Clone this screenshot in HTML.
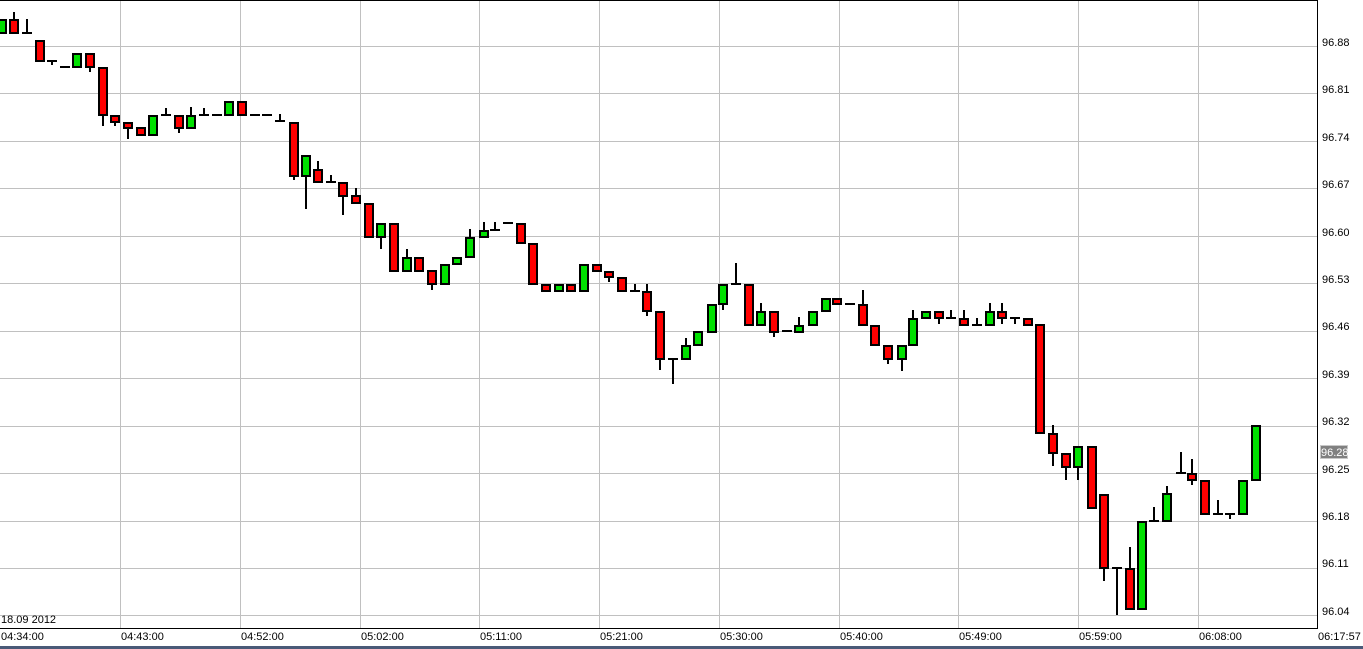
<!DOCTYPE html>
<html><head><meta charset="utf-8"><style>
html,body{margin:0;padding:0;background:#fff;}
#c{position:relative;width:1363px;height:649px;overflow:hidden;background:#fff;font-family:"Liberation Sans",sans-serif;font-size:11px;color:#000;}
.h{position:absolute;left:0;width:1317px;height:1px;background:#c0c0c0;}
.v{position:absolute;top:0;height:628px;width:1px;background:#c0c0c0;}
.b{position:absolute;box-sizing:border-box;border:2px solid #000;width:10px;}
.w{position:absolute;width:2px;background:#000;}
.d{position:absolute;height:2px;width:10px;background:#000;}
.pl{position:absolute;left:1322px;line-height:12px;}
.tl{position:absolute;top:631px;line-height:12px;}
</style></head><body><div id="c">
<div id="g"></div>
<div style="position:absolute;left:0;top:0;width:1317px;height:1px;background:#000"></div>
<div style="position:absolute;left:1317px;top:0;width:1px;height:629px;background:#000"></div>
<div style="position:absolute;left:0;top:628px;width:1318px;height:1px;background:#000"></div>
<div style="position:absolute;left:0;top:646px;width:1363px;height:3px;background:#4a5a78"></div>
<div style="position:absolute;left:1px;top:614px;line-height:12px">18.09 2012</div>
<div style="position:absolute;left:1320px;top:445px;width:28px;height:14px;background:#808080;border:1px solid #c8c8c8;color:#fff;line-height:14px;text-align:center;box-sizing:border-box">96.28</div>
<div class="pl" style="top:37px">96.88</div>
<div class="pl" style="top:84px">96.81</div>
<div class="pl" style="top:132px">96.74</div>
<div class="pl" style="top:179px">96.67</div>
<div class="pl" style="top:227px">96.60</div>
<div class="pl" style="top:274px">96.53</div>
<div class="pl" style="top:321px">96.46</div>
<div class="pl" style="top:369px">96.39</div>
<div class="pl" style="top:416px">96.32</div>
<div class="pl" style="top:464px">96.25</div>
<div class="pl" style="top:511px">96.18</div>
<div class="pl" style="top:558px">96.11</div>
<div class="pl" style="top:606px">96.04</div>
<div class="tl" style="left:1px">04:34:00</div>
<div class="tl" style="left:121px">04:43:00</div>
<div class="tl" style="left:241px">04:52:00</div>
<div class="tl" style="left:361px">05:02:00</div>
<div class="tl" style="left:480px">05:11:00</div>
<div class="tl" style="left:600px">05:21:00</div>
<div class="tl" style="left:720px">05:30:00</div>
<div class="tl" style="left:840px">05:40:00</div>
<div class="tl" style="left:959px">05:49:00</div>
<div class="tl" style="left:1079px">05:59:00</div>
<div class="tl" style="left:1199px">06:08:00</div>
<div class="tl" style="left:1318px">06:17:57</div>
<div id="k"></div>
</div>
<script>
var g='';
for(var i=0;i<13;i++){var y=Math.round(46+i*47.45);g+='<div class="h" style="top:'+y+'px"></div>';}
[120,240,360,479,599,719,839,958,1078,1198].forEach(function(x){g+='<div class="v" style="left:'+x+'px"></div>';});
document.getElementById('g').innerHTML=g;
// [x0, top, bottom, type, wickTop, wickBottom]
var D=[
[-3,19,33,'g'],[9,19,33,'r',12],[22,33,33,'d',19],[35,40,61,'r'],[47,61,61,'d',61,65],[60,67,67,'d'],
[72,53,67,'g'],[85,53,67,'r',0,72],[98,67,115,'r',0,126],[110,115,122,'r',0,126],[123,122,128,'r',0,139],
[136,127,135,'r'],[148,115,135,'g'],[161,115,115,'d',108],[174,115,128,'r',0,133],[186,115,128,'g',107],
[199,115,115,'d',108],[212,115,115,'d'],[224,101,115,'g'],[237,101,115,'r'],[250,115,115,'d'],[262,115,115,'d'],
[275,121,121,'d',114],[289,122,176,'r',0,180],[301,155,176,'g',0,209],[313,169,182,'r',161],[326,182,182,'d',175],
[338,182,196,'r',0,215],[351,195,203,'r',188],[364,203,237,'r'],[376,223,237,'g',0,249],[389,223,271,'r'],
[402,257,271,'g',249],[414,257,271,'r'],[427,270,284,'r',0,290],[440,264,284,'g'],[452,257,264,'g'],
[465,237,257,'g',229],[479,230,237,'g',222],[490,230,230,'d',222],[503,223,223,'d'],[516,223,243,'r'],
[528,243,284,'r'],[541,284,291,'r'],[554,284,291,'g'],[566,284,291,'r'],[579,264,291,'g'],[592,264,271,'r'],
[604,271,277,'r',0,282],[617,277,291,'r'],[630,291,291,'d',284],[642,291,311,'r',284,316],[655,311,359,'r',0,370],
[668,359,359,'d',0,384],[681,345,359,'g',338],[693,331,345,'g'],[707,304,332,'g'],[718,284,304,'g',0,310],
[731,284,284,'d',263],[744,284,325,'r'],[756,311,325,'g',303],[769,311,332,'r',0,337],[782,331,331,'d'],
[794,325,332,'g',317],[808,311,325,'g'],[821,298,311,'g'],[832,298,304,'r'],[845,304,304,'d'],
[858,304,325,'r',290],[870,325,345,'r'],[883,345,359,'r',0,364],[897,345,359,'g',0,371],[908,318,345,'g',310],
[921,311,318,'g'],[934,311,318,'r',0,324],[946,318,318,'d',310],[959,318,325,'r',310],[972,325,325,'d',318],
[985,311,325,'g',303],[997,311,318,'r',303,324],[1010,318,318,'d',0,324],[1023,318,325,'r'],[1035,324,433,'r'],
[1048,433,453,'r',425,466],[1061,453,467,'r',0,480],[1073,446,467,'g',0,480],[1087,446,508,'r'],
[1099,494,568,'r',0,581],[1112,568,568,'d',0,615],[1125,568,609,'r',547],[1137,521,609,'g'],
[1149,521,521,'d',507],[1162,493,521,'g',486],[1176,473,473,'d',452],[1187,473,480,'r',459,485],
[1200,480,514,'r'],[1213,514,514,'d',500],[1225,514,514,'d',0,519],[1238,480,514,'g'],[1251,425,480,'g']
];
var s='';
D.forEach(function(c){
 var x=c[0],t=c[1],b=c[2],ty=c[3],wt=c[4]||t,wb=c[5]||b;
 if(wt<t||wb>b){var a=Math.min(wt,t),z=Math.max(wb,b);s+='<div class="w" style="left:'+(x+4)+'px;top:'+a+'px;height:'+(z-a)+'px"></div>';}
 if(ty=='d'){s+='<div class="d" style="left:'+x+'px;top:'+(t-1)+'px"></div>';}
 else{s+='<div class="b" style="left:'+x+'px;top:'+t+'px;height:'+(b-t+1)+'px;background:'+(ty=='g'?'#00e000':'#ff0000')+'"></div>';}
});
document.getElementById('k').innerHTML=s;
</script>
</body></html>
